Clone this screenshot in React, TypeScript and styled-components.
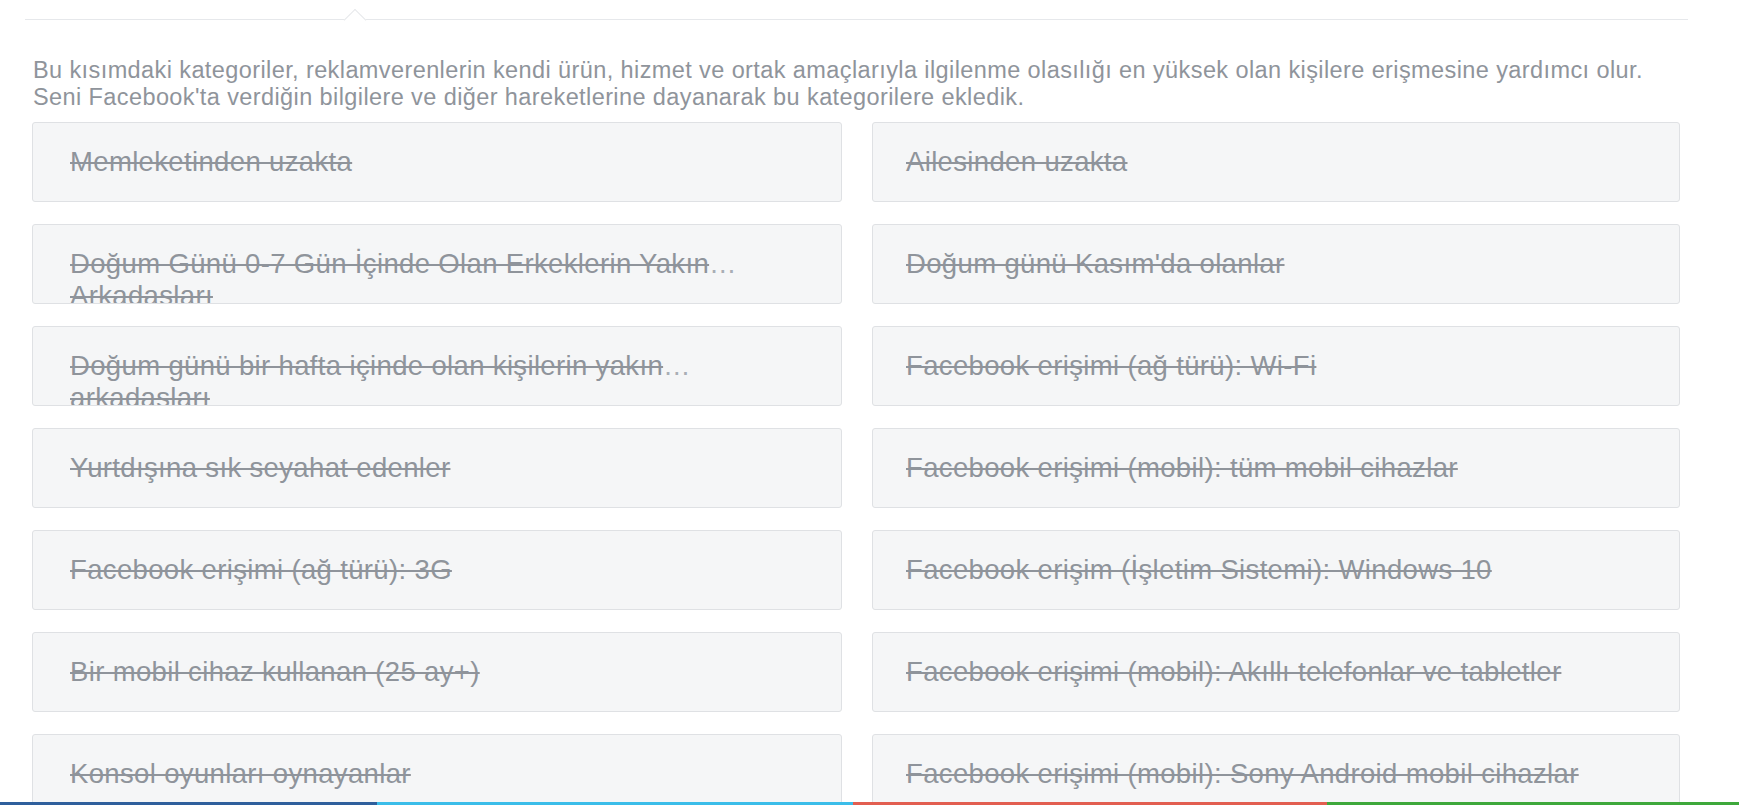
import React, { FC } from "react";
import styled, { createGlobalStyle } from "styled-components";

interface Category {
  lines: string[];
  clipped?: boolean;
}

const leftColumn: Category[] = [
  { lines: ["Memleketinden uzakta"] },
  {
    lines: ["Doğum Günü 0-7 Gün İçinde Olan Erkeklerin Yakın", "Arkadaşları"],
    clipped: true,
  },
  {
    lines: ["Doğum günü bir hafta içinde olan kişilerin yakın", "arkadaşları"],
    clipped: true,
  },
  { lines: ["Yurtdışına sık seyahat edenler"] },
  { lines: ["Facebook erişimi (ağ türü): 3G"] },
  { lines: ["Bir mobil cihaz kullanan (25 ay+)"] },
  { lines: ["Konsol oyunları oynayanlar"] },
];

const rightColumn: Category[] = [
  { lines: ["Ailesinden uzakta"] },
  { lines: ["Doğum günü Kasım'da olanlar"] },
  { lines: ["Facebook erişimi (ağ türü): Wi-Fi"] },
  { lines: ["Facebook erişimi (mobil): tüm mobil cihazlar"] },
  { lines: ["Facebook erişim (İşletim Sistemi): Windows 10"] },
  { lines: ["Facebook erişimi (mobil): Akıllı telefonlar ve tabletler"] },
  { lines: ["Facebook erişimi (mobil): Sony Android mobil cihazlar"] },
];

const bottomStripes = [
  { color: "#2f5f9c", width: 377 },
  { color: "#3bbde9", width: 476 },
  { color: "#e25e50", width: 474 },
  { color: "#3ea83b", width: 412 },
];

const GlobalStyle = createGlobalStyle`
  html, body {
    margin: 0;
    padding: 0;
    background: #ffffff;
    overflow: hidden;
  }
  body {
    font-family: "Liberation Sans", Arial, Helvetica, sans-serif;
  }
`;

const CategoryItem: FC<{ category: Category; right: boolean }> = ({
  category,
  right,
}) => (
  <CategoryBox $right={right}>
    {category.lines.map((line, i) => (
      <CategoryLine key={i}>
        <Struck>{line}</Struck>
        {category.clipped && i === 0 && <Ellipsis>…</Ellipsis>}
      </CategoryLine>
    ))}
  </CategoryBox>
);

const App: FC = () => (
  <>
    <GlobalStyle />
    <Page>
      <TabDivider>
        <TabCaret />
      </TabDivider>
      <Description>
        Bu kısımdaki kategoriler, reklamverenlerin kendi ürün, hizmet ve ortak
        amaçlarıyla ilgilenme olasılığı en yüksek olan kişilere erişmesine
        yardımcı olur.
        <br />
        Seni Facebook'ta verdiğin bilgilere ve diğer hareketlerine dayanarak bu
        kategorilere ekledik.
      </Description>
      <CategoryGrid>
        {leftColumn.map((item, i) => (
          <React.Fragment key={i}>
            <CategoryItem category={item} right={false} />
            <CategoryItem category={rightColumn[i]} right />
          </React.Fragment>
        ))}
      </CategoryGrid>
    </Page>
    <StripeBar>
      {bottomStripes.map((s) => (
        <Stripe key={s.color} $color={s.color} $width={s.width} />
      ))}
    </StripeBar>
  </>
);

export default App;

const Page = styled.div`
  width: 1648px;
  padding: 19px 0 0 32px;
`;

const TabDivider = styled.div`
  position: relative;
  margin: 0 -8px 0 -7px;
  height: 0;
  border-top: 1px solid #e6e8eb;
`;

const TabCaret = styled.div`
  position: absolute;
  left: 322px;
  top: -8px;
  width: 15px;
  height: 15px;
  background: #ffffff;
  border-top: 1px solid #e6e8eb;
  border-left: 1px solid #e6e8eb;
  transform: rotate(45deg);
`;

const Description = styled.p`
  margin: 37px 0 0 1px;
  font-size: 23.5px;
  letter-spacing: 0.4px;
  line-height: 27px;
  color: #8f949b;
  white-space: nowrap;
`;

const CategoryGrid = styled.div`
  display: grid;
  grid-template-columns: 810px 808px;
  grid-auto-rows: 80px;
  column-gap: 30px;
  row-gap: 22px;
  margin-top: 11px;
`;

const CategoryBox = styled.div<{ $right: boolean }>`
  box-sizing: border-box;
  height: 80px;
  padding: 23px 20px 0 ${(p) => (p.$right ? 33 : 37)}px;
  background: #f5f6f7;
  border: 1px solid #dfe1e4;
  border-radius: 3px;
  overflow: hidden;
`;

const CategoryLine = styled.div`
  font-size: 27.5px;
  letter-spacing: 0.35px;
  line-height: 32px;
  color: #8f949b;
  white-space: nowrap;
`;

const Struck = styled.span`
  text-decoration: line-through;
  text-decoration-thickness: 1.5px;
`;

const Ellipsis = styled.span`
  color: #a9aeb5;
`;

const StripeBar = styled.div`
  position: fixed;
  left: 0;
  right: 0;
  bottom: 0;
  display: flex;
  height: 3px;
`;

const Stripe = styled.div<{ $color: string; $width: number }>`
  flex: 0 0 ${(p) => p.$width}px;
  background: ${(p) => p.$color};
`;
